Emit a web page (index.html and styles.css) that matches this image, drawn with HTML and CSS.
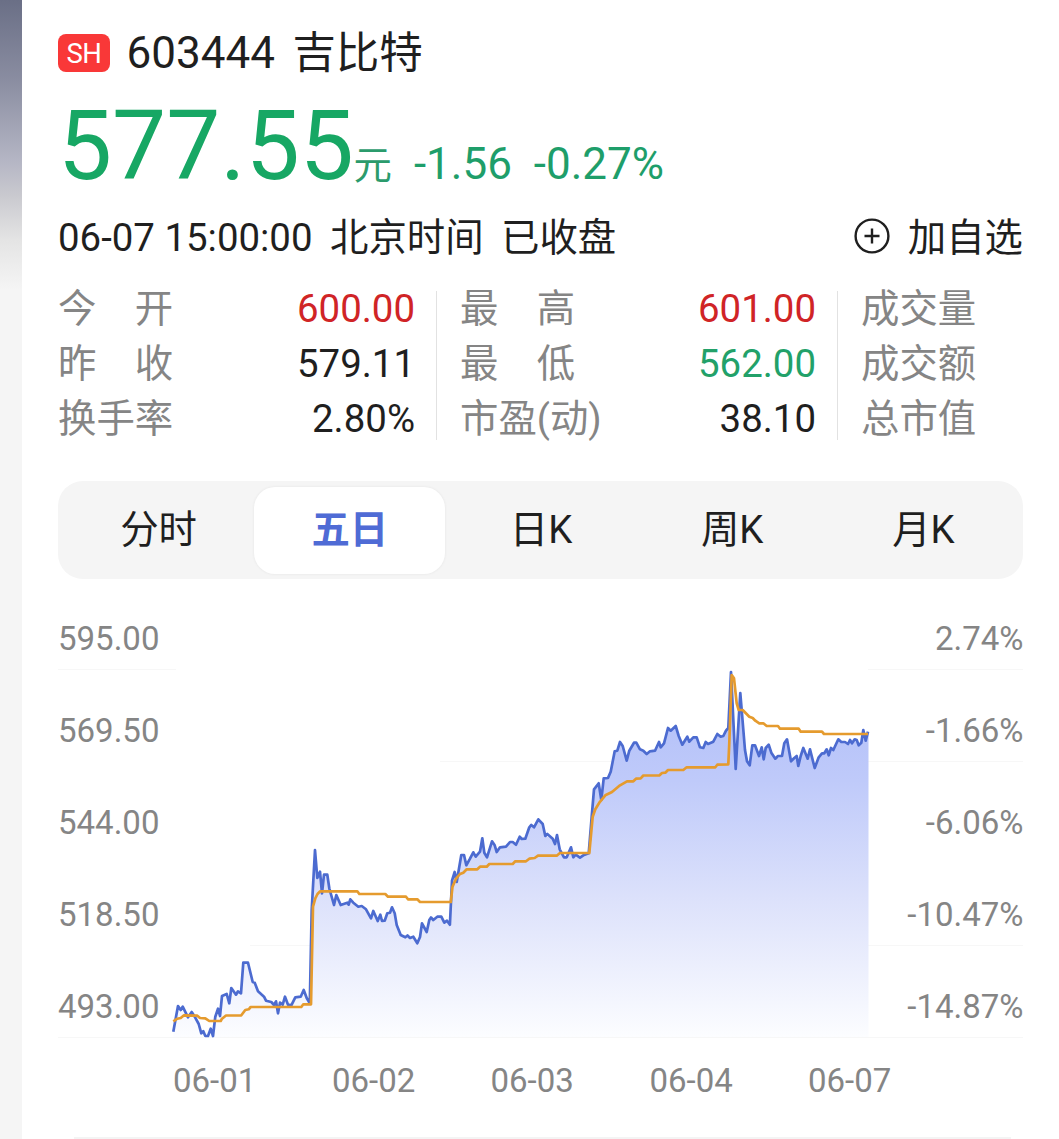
FILE: index.html
```
<!DOCTYPE html>
<html lang="zh-CN">
<head>
<meta charset="utf-8">
<title>吉比特 603444</title>
<link rel="stylesheet" href="styles.css">
</head>
<body>
<div class="page">
  <main class="card">
    <header class="title"><span class="market">SH</span><span class="code">603444</span><span class="name">吉比特</span></header>
    <div class="price"><span class="price-value">577.55</span><span class="price-unit">元</span><span class="change">-1.56</span><span class="change percent">-0.27%</span></div>
    <div class="status">
      <span class="time">06-07 15:00:00</span><span class="zone">北京时间</span><span class="state">已收盘</span>
      <a class="watch"><svg class="plus" viewBox="0 0 36 36" width="36" height="36"><circle cx="18" cy="18" r="16.4"/><path d="M10.5 18h15M18 10.5v15"/></svg><span class="watch-label">加自选</span></a>
    </div>
    <div class="quotes">
      <dl class="col">
        <div><dt>今　开</dt><dd class="up">600.00</dd></div>
        <div><dt>昨　收</dt><dd>579.11</dd></div>
        <div><dt>换手率</dt><dd>2.80%</dd></div>
      </dl>
      <dl class="col">
        <div><dt>最　高</dt><dd class="up">601.00</dd></div>
        <div><dt>最　低</dt><dd class="down">562.00</dd></div>
        <div><dt>市盈(动)</dt><dd>38.10</dd></div>
      </dl>
      <dl class="col">
        <div><dt>成交量</dt></div>
        <div><dt>成交额</dt></div>
        <div><dt>总市值</dt></div>
      </dl>
    </div>
    <nav class="tabs"><a>分时</a><a class="active">五日</a><a>日K</a><a>周K</a><a>月K</a></nav>
    <svg class="chart" viewBox="58 600 966 510" width="966" height="510">
      <defs><linearGradient id="fill" gradientUnits="userSpaceOnUse" x1="0" y1="671" x2="0" y2="1037"><stop offset="0" stop-color="#aebcf8"/><stop offset=".3" stop-color="#bfcafa"/><stop offset=".62" stop-color="#dce1fb"/><stop offset="1" stop-color="#fcfdff"/></linearGradient></defs>
      <path class="grid" d="M58 669.5H176M868 669.5H1023M868 761.5H1023M440 761.5H612M250 945.5H310M868 945.5H1023M58 1037.5H1023"/>
      <path class="area" fill="url(#fill)" d="M173.3 1037V1031.7L178 1006 180.7 1010 182.7 1006.7 188 1017.3 191.7 1012 194.7 1016.7 198.7 1024 201.3 1033.3 203.3 1031.3 205.3 1036 208 1036 210.7 1028.7 213 1036 215.3 1016.7 218 1008.7 220 1016 222 996 226.7 994 229.3 1003.3 231.3 988 236 994.7 238 991.3 241 993.3 243.3 962.7 248 962.7 252.7 982 254.7 982.7 258 991.3 264 996.7 266 1000.7 271.3 1002 274 1005 276 1001.3 278 1013.3 280 1002.7 282.7 1004.7 285 996.7 288 1004.7 291.3 1005.3 295.3 997.3 300.7 996.7 303.7 990 306.7 998 309.8 1003.3 311.7 910 315 850 317.3 878 320 871.7 322 893.3 324 874.7 327.3 874.7 329.3 888.3 334 905 336.3 895 340.7 905 347.3 902.7 350.3 899.3 358.3 906.7 366 909.3 371 918.3 373.3 911 377.7 921 380.3 914.7 382 921 384.7 920.7 387.3 913.3 390 912.7 392 907.3 394.7 913.3 396.7 925 400.7 935 405.3 937.3 413.3 936.7 417.3 943.3 420 937 422 923.3 426.7 932 429.3 920 433.3 920 437.3 916.7 441.3 916.7 444.3 922.7 447 920.7 449.9 924.7 452 880.7 454.7 872 456.7 882 461.3 855 464 855 466.3 865.3 470 858.7 473.3 852.3 475.7 856.7 480 851.7 482.3 838.3 484.3 852.7 487 857.3 492 841.3 494.7 845.3 496.7 852 500 847.3 506 846.7 510 842 516 844.7 519.7 836.7 525.3 838.7 529.3 827.3 534 827.3 538.3 819.3 542.7 824 545.3 836 552.7 838.7 555 844 557 835 559.7 849.3 564 857.3 566.7 857.3 571 847.3 573.3 857.3 575.7 854.7 580 857.7 583.3 855.3 588.7 853.3 591.7 816.7 594 789.3 598.7 783.3 601.3 800 603.7 778.3 608 778 610.7 771.7 614.7 751.3 617.3 750.7 620 742 622.7 746 626.7 760.7 629.3 750.7 634 742.7 636.3 742.7 640 749.3 646.7 754 655 750.7 659 742 660.7 747.3 664 743.3 668 728 670.7 730.7 675.7 726 678.7 736 682.3 744.7 687.3 736.7 689.3 741.7 693.3 737.3 696.7 737.3 700 747.3 703.3 748 705.7 742 708 744 713.3 741.7 717.3 734 723.3 736 726 730.7 728.3 728 731 673 735.7 768 740.3 694 745 750 749.7 765.3 752.3 745.3 755 745.3 759 756 761.7 747.3 763.7 759.3 765.7 748 768.7 744.7 771.3 752.7 775.3 758.7 782 756 784.3 743.3 787 739.3 791 761.3 796.7 756 798.3 766 803.3 748 807.7 758.7 810 749.3 814.7 768 818.7 757.3 826.7 749.3 828.7 755.3 831 748 833.3 750 838.3 739.3 841.3 742 848 744 850 740 852 743.3 854.7 739.3 858.7 745.3 861.3 742.7 863.3 730 865.7 740.7 868.5 731.7V1037Z"/>
      <polyline class="line" points="173.3,1031.7 178,1006 180.7,1010 182.7,1006.7 188,1017.3 191.7,1012 194.7,1016.7 198.7,1024 201.3,1033.3 203.3,1031.3 205.3,1036 208,1036 210.7,1028.7 213,1036 215.3,1016.7 218,1008.7 220,1016 222,996 226.7,994 229.3,1003.3 231.3,988 236,994.7 238,991.3 241,993.3 243.3,962.7 248,962.7 252.7,982 254.7,982.7 258,991.3 264,996.7 266,1000.7 271.3,1002 274,1005 276,1001.3 278,1013.3 280,1002.7 282.7,1004.7 285,996.7 288,1004.7 291.3,1005.3 295.3,997.3 300.7,996.7 303.7,990 306.7,998 309.8,1003.3 311.7,910 315,850 317.3,878 320,871.7 322,893.3 324,874.7 327.3,874.7 329.3,888.3 334,905 336.3,895 340.7,905 347.3,902.7 348.7,904.7 350.3,899.3 353.3,902.7 358.3,906.7 361.7,906 366,909.3 371,918.3 373.3,911 377.7,921 380.3,914.7 382,921 384.7,920.7 387.3,913.3 390,912.7 392,907.3 394.7,913.3 396.7,925 400.7,935 405.3,937.3 407.5,935.5 410,938 413.3,936.7 417.3,943.3 420,937 422,923.3 426.7,932 429.3,920 431,917.5 433.3,920 437.3,916.7 441.3,916.7 444.3,922.7 447,920.7 449.9,924.7 452,880.7 454.7,872 456.7,882 461.3,855 464,855 466.3,865.3 470,858.7 473.3,852.3 475.7,856.7 480,851.7 482.3,838.3 484.3,852.7 487,857.3 492,841.3 494.7,845.3 496.7,852 500,847.3 506,846.7 510,842 512.7,842 516,844.7 519.7,836.7 521.7,839 525.3,838.7 529.3,827.3 531.3,825 534,827.3 538.3,819.3 542.7,824 545.3,836 547.3,834 552.7,838.7 555,844 557,835 559.7,849.3 564,857.3 566.7,857.3 571,847.3 573.3,857.3 575.7,854.7 580,857.7 583.3,855.3 588.7,853.3 591.7,816.7 594,789.3 598.7,783.3 601.3,800 603.7,778.3 608,778 610.7,771.7 614.7,751.3 617.3,750.7 620,742 622.7,746 626.7,760.7 629.3,750.7 634,742.7 636.3,742.7 640,749.3 643.3,750.7 646.7,754 650,751.3 655,750.7 659,742 660.7,747.3 664,743.3 668,728 670.7,730.7 675.7,726 678.7,736 682.3,744.7 687.3,736.7 689.3,741.7 693.3,737.3 696.7,737.3 700,747.3 703.3,748 705.7,742 708,744 713.3,741.7 717.3,734 720.7,736.7 723.3,736 726,730.7 728.3,728 731,672 735.7,769 740.3,693 745,750 747,761.3 749.7,765.3 752.3,745.3 755,745.3 759,756 761.7,747.3 763.7,759.3 765.7,748 768.7,744.7 771.3,752.7 775.3,758.7 778,756 782,756 784.3,743.3 787,739.3 791,761.3 794.3,758 796.7,756 798.3,766 800.7,756 803.3,748 807.7,758.7 810,749.3 814.7,768 818.7,757.3 822,753.3 824.3,753.3 826.7,749.3 828.7,755.3 831,748 833.3,750 838.3,739.3 841.3,742 845,742 848,744 850,740 852,743.3 854.7,739.3 856.7,740 858.7,745.3 861.3,742.7 863.3,730 865.7,740.7 868,731.7"/>
      <polyline class="avg" points="173.3,1021.3 177.3,1018.7 180.7,1018 184,1015.3 197.3,1015.7 200,1018 205.3,1018.3 209.3,1021 220.7,1021 222,1018.7 226,1015.5 241.3,1015.3 245.3,1010 248.7,1009.3 250.7,1007 301.3,1007 303.3,1004.3 311,1004.3 313,906.7 315.3,898.3 317.5,894 320,891.3 357.3,891.3 359.3,894 385.3,894 388,896.7 406,896.7 408,899.3 417.3,899.3 420,902 450.8,902 452.5,886.7 456,878.7 460,874 463.3,872.7 466.7,869.3 477.3,869.3 480,866.7 486.7,866.7 489.3,864 512.7,864 515.3,861.3 526,861.3 529.3,858.7 534.7,858 538,855.7 556.7,855.7 560,853 589.3,853 592.7,816.7 595.3,809.3 599.3,802.7 605.3,795.3 612,792 620,785.3 627,781.3 633.3,781.3 636,778.7 640.7,778.3 643.3,775.5 659.3,775.5 662,773 665.3,772.7 668,770 683.3,770 686.7,767.3 715.3,767.3 717.3,764.7 728.3,764.3 729.3,743 731.7,675 734,678.3 736.7,703.3 738.7,710 742.7,710 749.3,716.7 752.7,718 755.3,720.7 759.3,723.3 763.3,723.3 766.7,726 778,726 780,728.7 798.7,728.7 800.7,731.7 822,731.7 824,734 868,734"/>
      <g class="axis"><text x="58" y="650">595.00</text><text x="58" y="742">569.50</text><text x="58" y="834">544.00</text><text x="58" y="926">518.50</text><text x="58" y="1018">493.00</text></g>
      <g class="axis right"><text x="1023.5" y="650">2.74%</text><text x="1023.5" y="742">-1.66%</text><text x="1023.5" y="834">-6.06%</text><text x="1023.5" y="926">-10.47%</text><text x="1023.5" y="1018">-14.87%</text></g>
      <g class="axis"><text x="173" y="1092">06-01</text><text x="332" y="1092">06-02</text><text x="490.5" y="1092">06-03</text><text x="649.5" y="1092">06-04</text><text x="808" y="1092">06-07</text></g>
    </svg>
    <hr class="rule">
  </main>
</div>
</body>
</html>
```
FILE: styles.css
```
* { box-sizing: border-box; }
body {
  margin: 0;
  background: #f5f5f5;
  color: #1f1f1f;
  font-family: Roboto, "Noto Sans CJK SC", sans-serif;
  font-size: 38.4px;
}
.page {
  height: 1139px;
  padding-left: 22px;
  overflow: hidden;
  background: linear-gradient(#6a6f86 0, #8a8da1 80px, #b4b5c4 160px, #c9c9cf 195px, #e4e4e4 240px, #f5f5f5 290px) no-repeat;
}
.card {
  height: 1139px;
  padding: 0 36px;
  background: #fff;
  white-space: nowrap;
}
.title {
  display: flex;
  align-items: center;
  height: 105px;
  padding-top: 1px;
  font-size: 44px;
}
.market {
  width: 52px;
  height: 38px;
  border-radius: 8px;
  background: #f93838;
  color: #fff;
  font-size: 27.5px;
  line-height: 39px;
  text-align: center;
  letter-spacing: -0.5px;
}
.code { margin-left: 16.5px; }
.name { margin-left: 17.5px; padding-bottom: 7px; font-size: 43.5px; }
.price {
  display: flex;
  align-items: baseline;
  height: 103px;
  color: #17a764;
  line-height: 84px;
}
.price-value { font-size: 96.3px; }
.price-unit { margin-left: -0.5px; color: #2b9b6c; line-height: 1; }
.change { margin-left: 22px; font-size: 44px; color: #1e9e6a; }
.percent { margin-left: 22px; }
.status {
  display: flex;
  align-items: center;
  height: 58px;
}
.zone, .state { margin-left: 17.5px; }
.zone, .state, .watch-label { padding-bottom: 6px; }
.watch {
  display: flex;
  align-items: center;
  gap: 18px;
  margin-left: auto;
}
.plus { margin-bottom: 2px; fill: none; stroke: #1f1f1f; stroke-width: 2.4; }
.quotes {
  display: flex;
  height: 190px;
  padding-top: 25px;
}
.col {
  display: flex;
  flex-direction: column;
  gap: 20px;
  width: 401px;
  height: 149px;
  margin: 0;
  padding-left: 23px;
  padding-right: 21px;
  border-left: 1px solid #e2e2e2;
  line-height: 35px;
}
.col:first-child { width: 378px; padding-left: 0; border-left: 0; }
.col:last-child { width: 140px; padding-right: 0; }
.col div {
  display: flex;
  justify-content: space-between;
  align-items: center;
  height: 35px;
}
dt { color: #858585; }
dd { margin: 0; }
.up { color: #d02426; }
.down { color: #22a169; }
.tabs {
  display: flex;
  height: 98px;
  margin-top: 25px;
  padding: 6px 4px 5px 5px;
  border-radius: 25px;
  background: #f5f5f5;
}
.tabs a {
  flex: 1;
  text-align: center;
  line-height: 86px;
}
.tabs .active {
  border-radius: 21px;
  background: #fff;
  box-shadow: 0 0 3px rgba(0, 0, 0, .07);
  color: #4f6bd5;
  font-weight: 700;
}
.chart { display: block; margin-top: 21px; }
.grid { stroke: #f7f7f7; }
.line, .avg {
  fill: none;
  stroke: #4c6bd0;
  stroke-width: 2.7;
  stroke-linejoin: round;
}
.avg { stroke: #e59b2e; }
.axis { fill: #858585; font-size: 33px; }
.right { text-anchor: end; }
.rule { height: 2px; margin: 27px 12px 0 16px; border: 0; background: #f4f4f4; }
```
